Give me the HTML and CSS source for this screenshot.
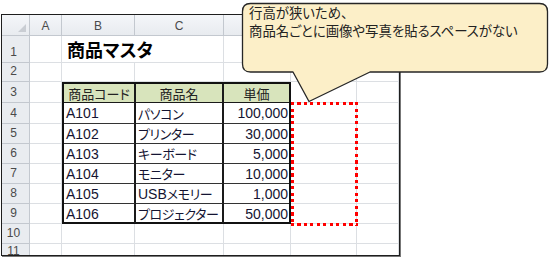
FILE: index.html
```html
<!DOCTYPE html>
<html lang="ja">
<head>
    <meta charset="UTF-8">
    <title>商品マスタ</title>
    <link rel="stylesheet" href="styles.css">
</head>
<body>
    <div class="page">
        <div class="sheet">
            <!-- 列見出し -->
            <div class="corner"></div>
            <div class="col-head">A</div>
            <div class="col-head">B</div>
            <div class="col-head">C</div>
            <div class="col-head">D</div>
            <div class="col-head">E</div>
            <div class="col-head">F</div>

            <!-- 1行目 -->
            <div class="row-head">1</div>
            <div class="cell"></div>
            <div class="cell title">商品マスタ</div>
            <div class="cell"></div>
            <div class="cell"></div>
            <div class="cell"></div>

            <!-- 2行目 -->
            <div class="row-head">2</div>
            <div class="cell"></div>
            <div class="cell"></div>
            <div class="cell"></div>
            <div class="cell"></div>
            <div class="cell"></div>
            <div class="cell"></div>

            <!-- 表 B3:D9 -->
            <div class="table">
                <div class="t-head">商品コード</div>
                <div class="t-head">商品名</div>
                <div class="t-head last">単価</div>

                <div class="t-cell">A101</div>
                <div class="t-cell jp">パソコン</div>
                <div class="t-cell num">100,000</div>

                <div class="t-cell">A102</div>
                <div class="t-cell jp">プリンター</div>
                <div class="t-cell num">30,000</div>

                <div class="t-cell">A103</div>
                <div class="t-cell jp">キーボード</div>
                <div class="t-cell num">5,000</div>

                <div class="t-cell">A104</div>
                <div class="t-cell jp">モニター</div>
                <div class="t-cell num">10,000</div>

                <div class="t-cell">A105</div>
                <div class="t-cell jp"><span class="latin">USB</span>メモリー</div>
                <div class="t-cell num">1,000</div>

                <div class="t-cell end">A106</div>
                <div class="t-cell jp end">プロジェクター</div>
                <div class="t-cell num end">50,000</div>
            </div>

            <!-- 画像を置きたい場所 -->
            <div class="mark">
                <div class="cell"></div>
                <div class="cell"></div>
                <div class="cell"></div>
                <div class="cell"></div>
                <div class="cell"></div>
                <div class="cell"></div>
            </div>

            <!-- 3行目 -->
            <div class="row-head">3</div>
            <div class="cell"></div>
            <div class="cell"></div>
            <div class="cell"></div>

            <!-- 4〜9行目 -->
            <div class="row-head">4</div>
            <div class="cell"></div>
            <div class="cell"></div>
            <div class="row-head">5</div>
            <div class="cell"></div>
            <div class="cell"></div>
            <div class="row-head">6</div>
            <div class="cell"></div>
            <div class="cell"></div>
            <div class="row-head">7</div>
            <div class="cell"></div>
            <div class="cell"></div>
            <div class="row-head">8</div>
            <div class="cell"></div>
            <div class="cell"></div>
            <div class="row-head">9</div>
            <div class="cell"></div>
            <div class="cell"></div>

            <!-- 10行目 -->
            <div class="row-head">10</div>
            <div class="cell"></div>
            <div class="cell"></div>
            <div class="cell"></div>
            <div class="cell"></div>
            <div class="cell"></div>
            <div class="cell"></div>

            <!-- 11行目 -->
            <div class="row-head">11</div>
            <div class="cell"></div>
            <div class="cell"></div>
            <div class="cell"></div>
            <div class="cell"></div>
            <div class="cell"></div>
            <div class="cell"></div>
        </div>

        <!-- 吹き出し -->
        <div class="callout">
            <svg class="callout-shape" width="310" height="104" viewBox="0 0 310 104">
                <path d="M10.5 3.5 H299.5 Q307.5 3.5 307.5 11.5 V64 Q307.5 72 299.5 72 H130 L69 101.5 L53 72 H10.5 Q2.5 72 2.5 64 V11.5 Q2.5 3.5 10.5 3.5 Z"
                      fill="#fcefc8" stroke="#262626" stroke-width="1.3" stroke-linejoin="round"/>
            </svg>
            <div class="callout-text">行高が狭いため、<br>商品名ごとに画像や写真を貼るスペースがない</div>
        </div>
    </div>
</body>
</html>
```

FILE: styles.css
```css
* {
    box-sizing: border-box;
}

body {
    margin: 0;
    background: #fff;
    font-family: "Liberation Sans", "Noto Sans CJK JP", sans-serif;
    font-feature-settings: "palt";
}

.page {
    position: relative;
    width: 550px;
    height: 257px;
    padding: 14px 0 0 1px;
    overflow: hidden;
}

/* シート本体 */
.sheet {
    width: 399px;
    height: 242px;
    border: 1px solid #1e1e1e;
    box-shadow: 1px 1px 0 #777;
    display: grid;
    grid-template-columns: 28px 32px 73px 89px 67px 66px 1fr;
    grid-template-rows: 21px 27px 19px 21px 21px repeat(6, 20px) 1fr;
    overflow: hidden;
    background: #fff;
}

.corner,
.col-head,
.row-head {
    background: linear-gradient(#f4f6f9, #e8ebef);
    border-right: 1px solid #c3c8cf;
    border-bottom: 1px solid #c3c8cf;
    color: #4a4a4a;
    font-size: 12px;
    line-height: 15px;
    display: flex;
    align-items: flex-end;
    justify-content: center;
    padding-bottom: 2px;
}

.col-head {
    padding-bottom: 1px;
}

.corner {
    position: relative;
}

.corner::after {
    content: "";
    position: absolute;
    right: 3px;
    bottom: 3px;
    border-left: 8px solid transparent;
    border-bottom: 8px solid #c9cdd3;
}

.row-head {
    background: #e9ecf0;
    padding-right: 4px;
}

.cell {
    border-right: 1px solid #dcdfe3;
    border-bottom: 1px solid #dcdfe3;
}

.title {
    grid-column: span 2;
    font-size: 18px;
    font-weight: bold;
    color: #000;
    display: flex;
    align-items: center;
    padding-left: 5px;
}

/* 商品マスタの表 */
.table {
    grid-column: 3 / 6;
    grid-row: 4 / 11;
    border: 2px solid #111;
    display: grid;
    grid-template-columns: 72px 88px 1fr;
    grid-template-rows: 19px 21px repeat(4, 20px) 1fr;
    font-size: 14px;
    color: #141432;
}

.t-head {
    background: #d8e4bc;
    border-right: 2px solid #1a1a1a;
    border-bottom: 1px solid #1a1a1a;
    display: flex;
    align-items: center;
    justify-content: center;
    color: #222;
    font-size: 13px;
}

.t-head.last,
.t-cell.num {
    border-right: none;
}

.t-cell {
    border-right: 2px solid #1a1a1a;
    border-bottom: 1px solid #333;
    display: flex;
    align-items: center;
    padding-left: 2px;
    white-space: nowrap;
}

.t-cell.jp {
    font-size: 13px;
    letter-spacing: -0.4px;
}

.t-cell .latin {
    font-size: 14px;
    letter-spacing: 0;
}

.t-cell.num {
    justify-content: flex-end;
    padding-right: 1px;
}

.t-cell.end {
    border-bottom: none;
}

/* 赤い点線の枠 */
.mark {
    grid-column: 6;
    grid-row: 5 / 11;
    position: relative;
    display: grid;
    grid-template-rows: 21px repeat(5, 20px);
}

.mark::after {
    content: "";
    position: absolute;
    left: 0;
    top: -1px;
    right: -1px;
    bottom: -2px;
    background:
        repeating-linear-gradient(90deg, #f00 0 3px, transparent 3px 6.5px) top / 100% 3px no-repeat,
        repeating-linear-gradient(90deg, #f00 0 3px, transparent 3px 6.5px) bottom / 100% 3px no-repeat,
        repeating-linear-gradient(180deg, #f00 0 3px, transparent 3px 6.5px) left / 3px 100% no-repeat,
        repeating-linear-gradient(180deg, #f00 0 3px, transparent 3px 6.5px) right / 3px 100% no-repeat;
}

/* 吹き出し */
.callout {
    position: absolute;
    left: 240px;
    top: 0;
    width: 310px;
    height: 104px;
}

.callout-shape {
    display: block;
}

.callout-text {
    position: absolute;
    left: 9px;
    top: 5px;
    font-size: 13.4px;
    line-height: 17.5px;
    color: #222;
    white-space: nowrap;
}
```
